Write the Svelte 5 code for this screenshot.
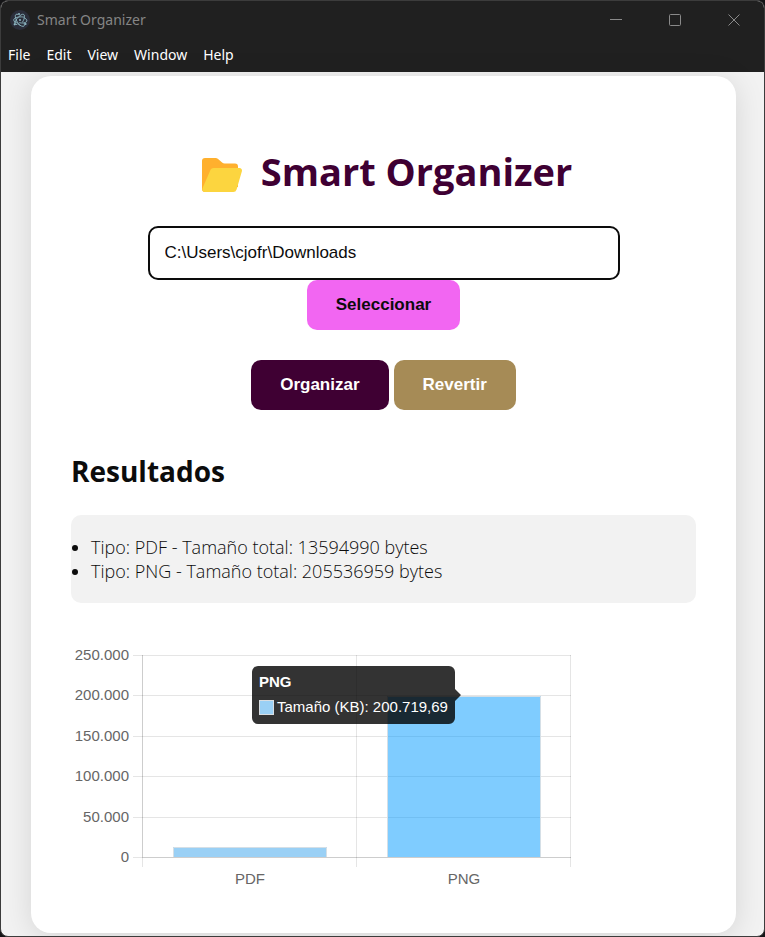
<script>
  const menu = ['File', 'Edit', 'View', 'Window', 'Help'];
  const results = [
    { type: 'PDF', bytes: 13594990 },
    { type: 'PNG', bytes: 205536959 }
  ];
  const ticks = [
    { label: '250.000', y: 12 },
    { label: '200.000', y: 52 },
    { label: '150.000', y: 93 },
    { label: '100.000', y: 133 },
    { label: '50.000', y: 174 },
    { label: '0', y: 214 }
  ];
  const columns = [71, 285, 499];
  let folder = $state('C:\\Users\\cjofr\\Downloads');
</script>

<div class="window">
  <header>
    <div class="titlebar">
      <svg class="logo" viewBox="0 0 20 20" aria-hidden="true">
        <circle cx="10" cy="10" r="10" fill="#2b2e3b" />
        <g fill="none" stroke="#8fb9c4" stroke-width="0.9" stroke-linecap="round">
          <path d="M13.900 7.100C10.500 6.400 5.200 7.200 4 9c-.7 1.100.1 2.600 1.600 3.900" />
          <path d="M6.100 11.700c1.800 2.600 4.700 4.500 7 4.700 1.300.1 1.600-1.300 1.100-3" />
          <path d="M6.900 14.500c-1.900 0-2.500-.8-1.900-2.400C5.800 9.800 8.500 6.400 11 4.900c2.200-1.300 3.600-.6 3.500 1.500 0 1.600-.7 3.600-1.800 5.400" />
          <path d="M7.700 4.300C6.200 3.800 5.200 4.600 5.300 6.300c.2 3 2.200 6.700 4.500 8.900" />
          <path d="M14.800 8.100c2 1 2.700 2.600 1.600 3.700-1.200 1.200-4 1.500-6.900 1" />
        </g>
        <g fill="#8fb9c4">
          <circle cx="10" cy="10" r="1" />
          <circle cx="9" cy="3.900" r="1" />
          <circle cx="4.700" cy="14.300" r="1.100" />
          <circle cx="15.500" cy="14" r="1.100" />
        </g>
      </svg>
      <span class="caption">Smart Organizer</span>
      <div class="controls">
        <button aria-label="Minimize"><svg viewBox="0 0 12 12"><path d="M0 5.5h12" /></svg></button>
        <button aria-label="Maximize"><svg viewBox="0 0 12 12"><rect x=".5" y=".5" width="11" height="11" rx="1" /></svg></button>
        <button aria-label="Close"><svg viewBox="0 0 12 12"><path d="M.5.5l11 11M11.5.5l-11 11" /></svg></button>
      </div>
    </div>
    <nav>
      {#each menu as item}
        <button>{item}</button>
      {/each}
    </nav>
  </header>

  <main>
    <section class="card">
      <h1>
        <svg class="folder" viewBox="0 0 42 36" aria-hidden="true">
          <path d="M1 4a3 3 0 0 1 3-3h10.500a4 4 0 0 1 2.600 1l4 3.500a4 4 0 0 0 2.600 1H34a3 3 0 0 1 3 3V30L4 35a3 3 0 0 1-3-3z" fill="#ffb02e" />
          <path d="M9 14a4 4 0 0 1 3.800-3H38.500a2.500 2.500 0 0 1 2.400 3.200L35.600 32.500A3.500 3.500 0 0 1 32.200 35H4a3 3 0 0 1-2.600-3.500z" fill="#fcd53f" />
        </svg>
        <span>Smart Organizer</span>
      </h1>

      <div class="picker">
        <input type="text" aria-label="Carpeta" bind:value={folder} />
        <button class="btn select">Seleccionar</button>
      </div>
      <div class="actions">
        <button class="btn organize">Organizar</button>
        <button class="btn revert">Revertir</button>
      </div>

      <h2>Resultados</h2>
      <ul>
        {#each results as r}
          <li>Tipo: {r.type} - Tamaño total: {r.bytes} bytes</li>
        {/each}
      </ul>

      <svg class="chart" viewBox="0 0 500 250" role="img" aria-label="Tamaño (KB)">
        <g class="grid">
          {#each ticks as t}
            <rect x="62" y={t.y} width="438" height="1" />
          {/each}
          {#each columns as x}
            <rect {x} y="12" width="1" height="212" />
          {/each}
          <rect x="71" y="12" width="1" height="202" />
          <rect x="71" y="214" width="429" height="1" />
        </g>
        {#each ticks as t}
          <text x="58" y={t.y + 5} text-anchor="end">{t.label}</text>
        {/each}
        <rect x="102" y="204" width="154" height="10" fill="#36a2eb" fill-opacity=".5" />
        <path class="edge" d="M102.500 214v-9.500h153V214" />
        <rect x="316" y="53" width="154" height="161" fill="#0099ff" fill-opacity=".5" />
        <path class="edge" d="M316.500 214V53.500h153V214" />
        <text x="179" y="241" text-anchor="middle">PDF</text>
        <text x="393" y="241" text-anchor="middle">PNG</text>
        <g class="tip">
          <path d="M187 23h191a6 6 0 0 1 6 6v17l6 6-6 6v17a6 6 0 0 1-6 6H187a6 6 0 0 1-6-6V29a6 6 0 0 1 6-6z" fill="#000" fill-opacity=".8" />
          <text class="bold" x="188" y="44">PNG</text>
          <rect x="188.500" y="57.500" width="14" height="14" fill="#9ad0f5" stroke="#d9dee2" />
          <text x="206" y="69">Tamaño (KB): 200.719,69</text>
        </g>
      </svg>
    </section>
  </main>
</div>

<style>
  :global(body) {
    margin: 0;
    background: #141416;
  }
  :global(*) {
    box-sizing: border-box;
  }
  .window {
    min-height: 100vh;
    display: flex;
    flex-direction: column;
    border: 1px solid #3c3c3c;
    border-radius: 8px;
    overflow: hidden;
    background: #f2f2f2;
    color: #0c0c0c;
    font-family: "Open Sans", "Noto Sans", sans-serif;
  }
  header {
    background: #202020;
  }
  header button {
    border: 0;
    padding: 0;
    background: none;
    font: inherit;
    color: inherit;
  }
  .titlebar {
    display: flex;
    align-items: center;
    height: 38px;
    padding: 0 1px 0 9px;
    gap: 7px;
    color: #858585;
    font: 14px/20px "Noto Sans", sans-serif;
  }
  .logo {
    width: 20px;
    height: 20px;
  }
  .controls {
    display: flex;
    margin-left: auto;
  }
  .controls button {
    width: 59px;
    height: 38px;
    display: flex;
    align-items: center;
    justify-content: center;
  }
  .controls svg {
    width: 12px;
    height: 12px;
    fill: none;
    stroke: #8a8a8a;
  }
  nav {
    display: flex;
    height: 33px;
    align-items: center;
    gap: 16px;
    padding: 0 7px 2px;
    color: #fff;
    font: 14px/20px "Noto Sans", sans-serif;
  }
  main {
    flex: 1;
    padding: 4px 28px 3px 30px;
  }
  .card {
    padding: 40px;
    background: #fff;
    border-radius: 20px;
    box-shadow: 0 4px 30px rgba(0, 0, 0, 0.12);
  }
  h1 {
    display: flex;
    justify-content: center;
    align-items: center;
    gap: 18px;
    margin: 26px 0 25px;
    padding-left: 6px;
    font-size: 38px;
    line-height: 59px;
    font-weight: 700;
    color: #3f0033;
  }
  .folder {
    width: 42px;
    height: 36px;
    margin-top: 6px;
  }
  .picker {
    display: flex;
    flex-direction: column;
    align-items: center;
  }
  input {
    width: 472px;
    max-width: 100%;
    height: 54px;
    padding: 0 15px;
    border: 2px solid #0c0c0c;
    border-radius: 10px;
    background: #fff;
    color: #0c0c0c;
    font: 17px "Liberation Sans", Arial, sans-serif;
  }
  .btn {
    height: 50px;
    padding: 0 29px;
    border: 0;
    border-radius: 10px;
    font: bold 17px "Liberation Sans", Arial, sans-serif;
    color: #fff;
  }
  .select {
    background: #f266f2;
    color: #0c0c0c;
  }
  .organize {
    background: #3f0033;
  }
  .revert {
    background: #a68b56;
  }
  .actions {
    display: flex;
    justify-content: center;
    gap: 5px;
    margin-top: 30px;
  }
  h2 {
    margin: 40px 0 23px;
    font-size: 28px;
    line-height: 42px;
    font-weight: 700;
  }
  ul {
    margin: 0 0 40px;
    padding: 20px;
    border-radius: 10px;
    background: #f2f2f2;
    font-size: 18px;
    line-height: 24px;
    font-weight: 300;
  }
  .chart {
    display: block;
    width: 100%;
    max-width: 500px;
    font: 15px "Liberation Sans", Arial, sans-serif;
    fill: #666;
  }
  .grid {
    fill: rgba(0, 0, 0, 0.1);
  }
  .edge {
    fill: none;
    stroke: #d5dfe6;
  }
  .tip text {
    fill: #fff;
  }
  .bold {
    font-weight: bold;
  }
</style>
